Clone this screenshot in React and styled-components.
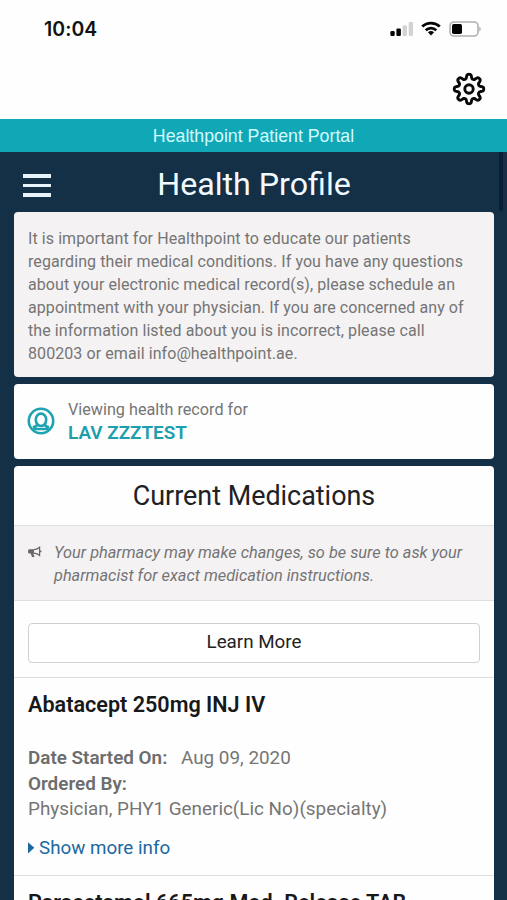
import React from 'react';
import styled, { createGlobalStyle } from 'styled-components';

const GlobalStyles = createGlobalStyle`
  * {
    box-sizing: border-box;
    margin: 0;
    padding: 0;
  }
  body {
    background: #143046;
    font-family: Roboto, 'Liberation Sans', sans-serif;
    overflow: hidden;
  }
  svg {
    display: block;
    flex: none;
  }
`;

const PhoneStyles = styled.div`
  width: 507px;
  height: 900px;
  overflow: hidden;
  display: flex;
  flex-direction: column;
  background: #143046;
  color: #757575;
`;

const StatusBar = styled.div`
  height: 57px;
  flex: none;
  display: flex;
  align-items: center;
  justify-content: space-between;
  padding: 0 25px 0 44px;
  background: #fefefe;
`;

const Clock = styled.span`
  font-family: Inter, sans-serif;
  font-size: 19.4px;
  font-weight: 600;
  letter-spacing: 0.1px;
  color: #111;
`;

const StatusIcons = styled.div`
  display: flex;
  align-items: center;
  gap: 8px;
`;

const SettingsBar = styled.div`
  height: 62px;
  flex: none;
  display: flex;
  justify-content: flex-end;
  padding: 15px 21px 0 0;
  background: #fefefe;
`;

const PortalBar = styled.div`
  height: 33px;
  flex: none;
  background: #10a8b7;
  color: #d2fbff;
  font-family: 'Liberation Sans', sans-serif;
  font-size: 17.75px;
  line-height: 35px;
  text-align: center;
`;

const PageHeader = styled.header`
  height: 60px;
  flex: none;
  display: grid;
  grid-template-columns: 60px 1fr 60px;
  align-items: start;
  position: relative;
  h1 {
    font-size: 32.2px;
    font-weight: 400;
    line-height: 38px;
    padding: 13px 0 0 1px;
    text-align: center;
    color: #f3faff;
  }
`;

const MenuButton = styled.button`
  width: 28px;
  margin: 22px 0 0 23px;
  border: 0;
  background: none;
  display: flex;
  flex-direction: column;
  gap: 6px;
  span {
    height: 3.6px;
    background: #e6f3fb;
  }
`;

const ScrollThumb = styled.div`
  position: absolute;
  top: 0;
  right: 4px;
  width: 4px;
  height: 59px;
  border-radius: 0 0 2px 2px;
  background: #0a1f33;
`;

const Cards = styled.main`
  flex: 1;
  display: flex;
  flex-direction: column;
  gap: 7px;
  padding: 0 13px 0 14px;
`;

const Card = styled.section`
  flex: none;
  border-radius: ${({ $open }) => ($open ? '4px 4px 0 0' : '4px')};
  background: ${({ $muted }) => ($muted ? '#f4f2f3' : '#fefefe')};
`;

const IntroText = styled.p`
  padding: 15px 14px 12px;
  font-size: 16px;
  line-height: 23px;
  letter-spacing: 0.08px;
  white-space: nowrap;
`;

const PatientRow = styled.div`
  height: 75px;
  display: flex;
  align-items: center;
  gap: 13px;
  padding: 0 13px 2px;
  p {
    padding-top: 2px;
    font-size: 16.2px;
    line-height: 23px;
  }
  strong {
    display: block;
    font-size: 18.9px;
    font-weight: 600;
    line-height: 24px;
    color: #1d9eac;
  }
`;

const CardTitle = styled.h2`
  height: 60px;
  border-bottom: 1px solid #dedede;
  font-size: 26.9px;
  font-weight: 400;
  line-height: 60px;
  text-align: center;
  color: #202124;
`;

const Notice = styled.div`
  height: 75px;
  display: flex;
  gap: 12px;
  padding: 15px 13px 0 14px;
  border-bottom: 1px solid #dedede;
  background: #f4f2f3;
  svg {
    margin-top: 5px;
  }
  p {
    font-size: 16.33px;
    font-style: italic;
    line-height: 23px;
    white-space: nowrap;
  }
`;

const Actions = styled.div`
  height: 76px;
  padding: 22px 14px 0;
`;

const LearnMoreButton = styled.button`
  width: 100%;
  height: 40px;
  padding-bottom: 3px;
  border: 1.5px solid #d0d0d2;
  border-radius: 4px;
  background: #fff;
  color: #222;
  font-family: inherit;
  font-size: 18.8px;
`;

const Medication = styled.article`
  height: 198px;
  padding: 14px 14px 0;
  border-top: 1px solid #dedede;
  h3 {
    margin-bottom: 28px;
    font-size: 21.6px;
    font-weight: 600;
    line-height: 25px;
    color: #17181a;
    white-space: nowrap;
  }
`;

const Detail = styled.p`
  font-size: 18.88px;
  line-height: 25.5px;
  white-space: nowrap;
  b {
    font-weight: 600;
    margin-right: 9px;
    color: #6d6d6d;
  }
`;

const MoreLink = styled.a`
  display: flex;
  align-items: center;
  gap: 4px;
  margin-top: 14px;
  color: #1b68a0;
  font-size: 18.8px;
  line-height: 25px;
`;

const medications = [
  {
    name: 'Abatacept 250mg INJ IV',
    started: 'Aug 09, 2020',
    orderedBy: 'Physician, PHY1 Generic(Lic No)(specialty)',
  },
  { name: 'Paracetamol 665mg Mod. Release TAB' },
];

// wavy ring with eight rounded teeth
const gearPath = () => {
  const points = [];
  for (let deg = 0; deg < 360; deg += 3) {
    const a = (deg * Math.PI) / 180;
    const wave = Math.cos(8 * a);
    const r = 12.6 + 2.25 * Math.tanh(1.8 * wave);
    points.push(
      `${(17 + r * Math.cos(a)).toFixed(2)} ${(17 + r * Math.sin(a)).toFixed(2)}`
    );
  }
  return `M${points.join('L')}Z`;
};

const SignalIcon = () => (
  <svg width="23" height="16" viewBox="0 0 23 16">
    <rect x=".4" y="10" width="4.3" height="5" rx="1.2" fill="#050505" />
    <rect x="6.4" y="7.5" width="4.5" height="7.5" rx="1.2" fill="#050505" />
    <rect x="12.6" y="4.3" width="4.3" height="10.7" rx="1.2" fill="#d2d2d2" />
    <rect x="18.7" y="1" width="4.3" height="14" rx="1.2" fill="#d2d2d2" />
  </svg>
);

const WifiIcon = () => (
  <svg width="20" height="16" viewBox="0 0 20 16">
    <g fill="none" stroke="#050505" strokeWidth="2.7">
      <path d="M1.2 5.6C6.2 .9 13.8 .9 18.8 5.6" />
      <path d="M4.7 9.2C7.7 6.3 12.3 6.3 15.3 9.2" />
    </g>
    <path d="M6.9 11.2Q10 8.9 13.1 11.2L10 14.5Z" fill="#050505" />
  </svg>
);

const BatteryIcon = () => (
  <svg width="33" height="16" viewBox="0 0 33 16">
    <rect
      x="1"
      y="1"
      width="28"
      height="14"
      rx="4"
      fill="#fff"
      stroke="#b0b0b0"
      strokeWidth="1.6"
    />
    <rect x="3" y="3" width="10" height="10" rx="1.8" fill="#000" />
    <path d="M30.3 5.5Q33.3 8 30.3 10.5Z" fill="#aaa" />
  </svg>
);

const GearIcon = () => (
  <svg
    width="34"
    height="34"
    viewBox="0 0 34 34"
    fill="none"
    stroke="#0a0a0a"
    strokeWidth="2.9"
    strokeLinejoin="round"
  >
    <path d={gearPath()} />
    <circle cx="17" cy="17" r="4.2" />
  </svg>
);

const PatientIcon = () => (
  <svg
    width="28"
    height="28"
    viewBox="0 0 28 28"
    fill="none"
    stroke="#1da3b1"
    strokeWidth="2.6"
  >
    <circle cx="14" cy="14" r="12.2" />
    <ellipse cx="14" cy="12.8" rx="5.2" ry="6.2" />
    <path d="M10.6 17.4Q9.6 19.4 5.8 20.4M17.4 17.4Q18.4 19.4 22.2 20.4M6.4 22H21.6" />
  </svg>
);

const MegaphoneIcon = () => (
  <svg width="14" height="12" viewBox="0 0 14 12">
    <path d="M1 3.2H6V7.6H5.3L6.6 11H4L2.7 7.6H1Q0 7.4 0 5.4T1 3.2Z" fill="#686868" />
    <path
      d="M6 3.6Q9.5 3.2 11.6 1.2V9.5Q9.5 7.6 6 7.2M12.8 4.4V6.3"
      fill="none"
      stroke="#686868"
      strokeWidth="1.2"
    />
  </svg>
);

const CaretIcon = () => (
  <svg width="7" height="12" viewBox="0 0 7 12">
    <path d="M0 .2L6.3 5.7L0 11.4Z" fill="#1b68a0" />
  </svg>
);

export default function App() {
  return (
    <PhoneStyles>
      <GlobalStyles />
      <StatusBar>
        <Clock>10:04</Clock>
        <StatusIcons>
          <SignalIcon />
          <WifiIcon />
          <BatteryIcon />
        </StatusIcons>
      </StatusBar>
      <SettingsBar>
        <GearIcon />
      </SettingsBar>
      <PortalBar>Healthpoint Patient Portal</PortalBar>
      <PageHeader>
        <MenuButton aria-label="Menu">
          <span />
          <span />
          <span />
        </MenuButton>
        <h1>Health Profile</h1>
        <ScrollThumb />
      </PageHeader>
      <Cards>
        <Card $muted>
          <IntroText>
            It is important for Healthpoint to educate our patients
            <br />
            regarding their medical conditions. If you have any questions
            <br />
            about your electronic medical record(s), please schedule an
            <br />
            appointment with your physician. If you are concerned any of
            <br />
            the information listed about you is incorrect, please call
            <br />
            800203 or email info@healthpoint.ae.
          </IntroText>
        </Card>
        <Card>
          <PatientRow>
            <PatientIcon />
            <p>
              Viewing health record for
              <strong>LAV ZZZTEST</strong>
            </p>
          </PatientRow>
        </Card>
        <Card $open>
          <CardTitle>Current Medications</CardTitle>
          <Notice>
            <MegaphoneIcon />
            <p>
              Your pharmacy may make changes, so be sure to ask your
              <br />
              pharmacist for exact medication instructions.
            </p>
          </Notice>
          <Actions>
            <LearnMoreButton>Learn More</LearnMoreButton>
          </Actions>
          {medications.map(({ name, started, orderedBy }) => (
            <Medication key={name}>
              <h3>{name}</h3>
              {started && (
                <>
                  <Detail>
                    <b>Date Started On:</b> {started}
                  </Detail>
                  <Detail>
                    <b>Ordered By:</b>
                  </Detail>
                  <Detail>{orderedBy}</Detail>
                  <MoreLink>
                    <CaretIcon />
                    Show more info
                  </MoreLink>
                </>
              )}
            </Medication>
          ))}
        </Card>
      </Cards>
    </PhoneStyles>
  );
}
